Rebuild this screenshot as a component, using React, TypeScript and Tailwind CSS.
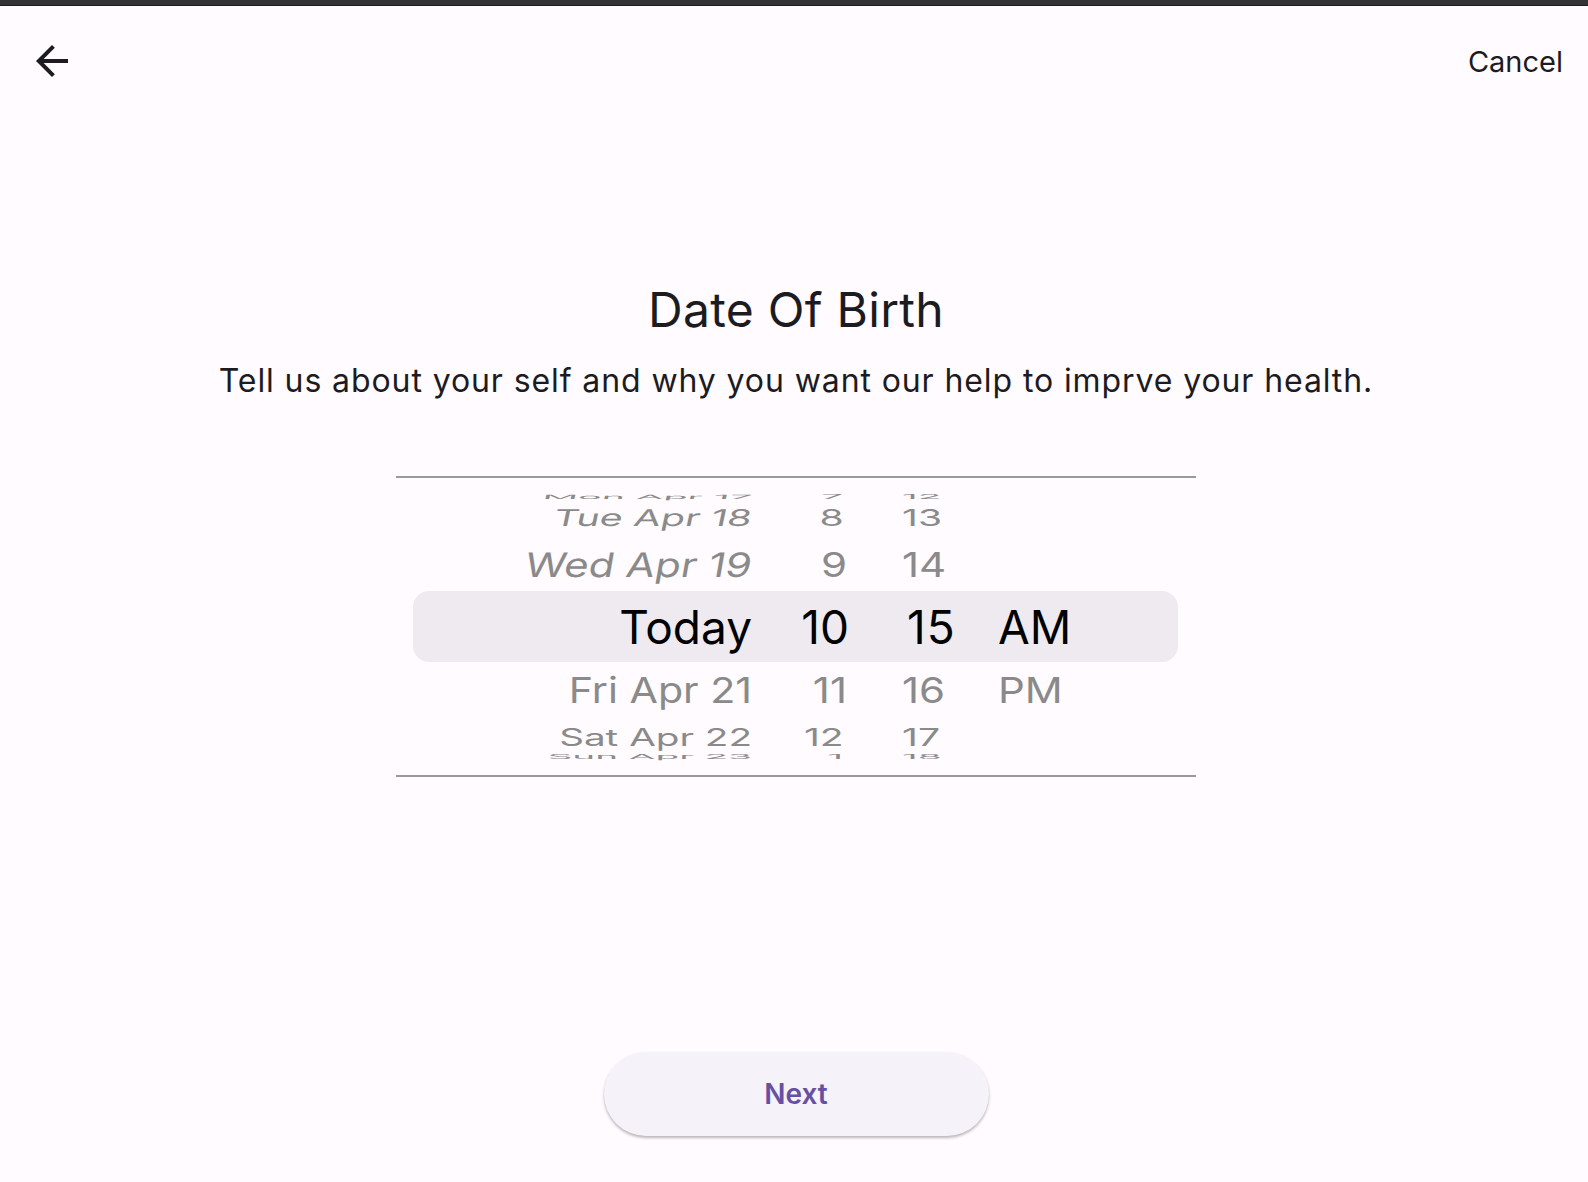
import type { FC } from "react";
import { clsx } from "clsx";

// row transforms for the wheel, index 0..6 (3 = selected)
const ROW_FX = [
  "[transform:translateY(62px)_scale(0.92,0.14)]",
  "[transform:translateY(19px)_scale(0.93,0.55)]",
  "[transform:translateY(2px)_scaleY(0.8)]",
  "",
  "[transform:translateY(-1px)_scaleY(0.84)]",
  "[transform:translateY(-18px)_scale(0.93,0.57)]",
  "[transform:translateY(-62px)_scale(0.92,0.14)]",
];

const DATE_FX = [
  "[transform:translateY(62px)_skewX(-14deg)_scale(0.94,0.14)]",
  "[transform:translateY(19px)_skewX(-12deg)_scale(0.94,0.55)]",
  "[transform:translateY(2px)_skewX(-10deg)_scaleY(0.8)]",
  "",
  "[transform:translateY(-1px)_scale(0.98,0.84)]",
  "[transform:translateY(-18px)_scale(0.92,0.57)]",
  "[transform:translateY(-62px)_scale(0.92,0.14)]",
];

const DATES = ["Mon Apr 17", "Tue Apr 18", "Wed Apr 19", "Today", "Fri Apr 21", "Sat Apr 22", "Sun Apr 23"];
const HOURS = ["7", "8", "9", "10", "11", "12", "1"];
const MINUTES = ["12", "13", "14", "15", "16", "17", "18"];
const PERIODS = [null, null, null, "AM", "PM", null, null];

type WheelProps = {
  items: (string | null)[];
  fx: string[];
  className: string;
  rowClassName: string;
  selectedClassName?: string;
};

const Wheel: FC<WheelProps> = ({ items, fx, className, rowClassName, selectedClassName }) => (
  <div className={clsx("flex h-full min-h-0 flex-col justify-center", className)}>
    {items.map((label, idx) => (
      <div
        key={idx}
        className={clsx(
          "h-[64px] shrink-0 whitespace-nowrap leading-[64px]",
          rowClassName,
          fx[idx],
          idx === 3
            ? clsx("text-[46px] text-black", selectedClassName)
            : "text-[42px] text-[#8a8a8a]",
        )}
      >
        {label ?? "\u00a0"}
      </div>
    ))}
  </div>
);

const BackArrow: FC = () => (
  <svg viewBox="0 0 24 24" className="h-12 w-12 fill-[#1c1b1f]">
    <path d="M20 11H7.83l5.59-5.59L12 4l-8 8 8 8 1.41-1.41L7.83 13H20v-2z" />
  </svg>
);

export default function App() {
  return (
    <div className="flex min-h-[1182px] flex-col bg-[#fffbfe] font-['Inter','Noto_Sans',sans-serif] text-[#1c1b1f]">
      <div className="h-[6px] border-b border-[#1a1a1a] bg-[#333333]" />

      <header className="flex h-[110px] items-center justify-between pl-[28px] pr-[25px]">
        <button className="flex">
          <BackArrow />
        </button>
        <button className="text-[29px] leading-none">Cancel</button>
      </header>

      <main className="flex flex-col pl-[4px]">
        <h1 className="mt-[170px] text-center text-[48px] leading-none tracking-[0.3px]">Date Of Birth</h1>
        <p className="mt-[31px] text-center text-[32px] leading-none tracking-[0.9px]">
          Tell us about your self and why you want our help to imprve your health.
        </p>

        <div className="mx-auto mt-[79px] grid h-[301px] w-[800px] grid-cols-1 grid-rows-1 overflow-hidden border-y-2 border-[#9a9a9a]">
          <div className="ml-[17px] mr-[18px] h-[71px] self-center rounded-[16px] bg-[rgba(118,118,128,0.12)] [grid-area:1/1]" />
          <div className="flex h-full min-h-0 [grid-area:1/1]">
            <Wheel
              items={DATES}
              fx={DATE_FX}
              className="w-[356px]"
              rowClassName="origin-right text-right"
            />
            <Wheel
              items={HOURS}
              fx={ROW_FX}
              className="w-[95px]"
              rowClassName="text-right"
              selectedClassName="translate-x-[2px]"
            />
            <Wheel
              items={MINUTES}
              fx={ROW_FX}
              className="w-[130px] pl-[55px]"
              rowClassName="origin-left text-left"
              selectedClassName="translate-x-[5px] tracking-[1px]"
            />
            <Wheel
              items={PERIODS}
              fx={ROW_FX}
              className="flex-1 pl-[21px]"
              rowClassName="origin-left text-left"
            />
          </div>
        </div>

        <button className="mx-auto mt-[275px] h-[84px] w-[385px] rounded-full bg-[#f5f2f9] text-[28px] font-semibold text-[#6750a4] shadow-[0_2px_3px_rgba(0,0,0,0.28)]">
          Next
        </button>
      </main>
    </div>
  );
}
